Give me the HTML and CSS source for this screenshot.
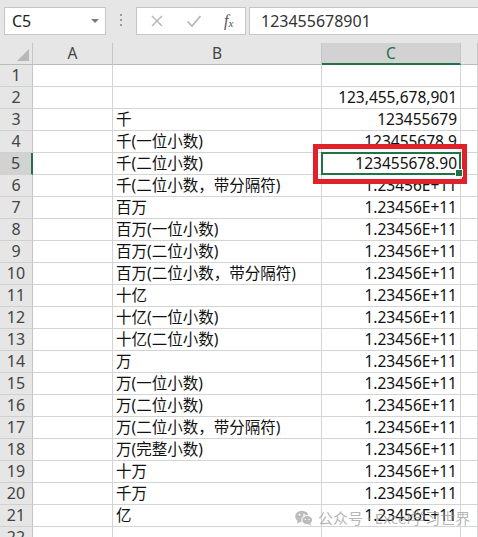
FILE: index.html
```html
<!DOCTYPE html>
<html lang="zh-CN">

<head>
    <meta charset="UTF-8">
    <meta name="viewport" content="width=device-width, initial-scale=1.0">
    <title>数字格式</title>
    <link rel="stylesheet" href="styles.css">
</head>

<body>
    <div class="libro">
        <!-- barra de fórmulas -->
        <div class="barra-formulas">
            <div class="cuadro-nombre">
                <span>C5</span>
                <span class="flecha"></span>
            </div>
            <div class="puntos"><i></i><i></i><i></i></div>
            <div class="botones-fx">
                <svg width="14" height="14" viewBox="0 0 14 14">
                    <path d="M2 2 L12 12 M12 2 L2 12" stroke="#b4b4b4" stroke-width="1.4" fill="none" />
                </svg>
                <svg width="16" height="14" viewBox="0 0 16 14">
                    <path d="M1.5 7.5 L6 12 L14.5 2" stroke="#b4b4b4" stroke-width="1.6" fill="none" />
                </svg>
                <span class="fx">f<sub>x</sub></span>
            </div>
            <div class="entrada">123455678901</div>
        </div>

        <!-- hoja -->
        <div class="hoja">
            <div class="esquina"><span class="triangulo"></span></div>
            <div class="cab-col">A</div>
            <div class="cab-col">B</div>
            <div class="cab-col activa">C</div>
            <div class="cab-col"></div>

            <div class="num">1</div><div class="celda"></div><div class="celda"></div><div class="celda"></div><div class="celda"></div>
            <div class="num">2</div><div class="celda"></div><div class="celda"></div><div class="celda dato">123,455,678,901</div><div class="celda"></div>
            <div class="num">3</div><div class="celda"></div><div class="celda texto">千</div><div class="celda dato">123455679</div><div class="celda"></div>
            <div class="num">4</div><div class="celda"></div><div class="celda texto">千(一位小数)</div><div class="celda dato">123455678.9</div><div class="celda"></div>
            <div class="num activa">5</div><div class="celda"></div><div class="celda texto">千(二位小数)</div><div class="celda dato seleccion">123455678.90<span class="asa"></span></div><div class="celda"></div>
            <div class="num">6</div><div class="celda"></div><div class="celda texto">千(二位小数，带分隔符)</div><div class="celda dato">1.23456E+11</div><div class="celda"></div>
            <div class="num">7</div><div class="celda"></div><div class="celda texto">百万</div><div class="celda dato">1.23456E+11</div><div class="celda"></div>
            <div class="num">8</div><div class="celda"></div><div class="celda texto">百万(一位小数)</div><div class="celda dato">1.23456E+11</div><div class="celda"></div>
            <div class="num">9</div><div class="celda"></div><div class="celda texto">百万(二位小数)</div><div class="celda dato">1.23456E+11</div><div class="celda"></div>
            <div class="num">10</div><div class="celda"></div><div class="celda texto">百万(二位小数，带分隔符)</div><div class="celda dato">1.23456E+11</div><div class="celda"></div>
            <div class="num">11</div><div class="celda"></div><div class="celda texto">十亿</div><div class="celda dato">1.23456E+11</div><div class="celda"></div>
            <div class="num">12</div><div class="celda"></div><div class="celda texto">十亿(一位小数)</div><div class="celda dato">1.23456E+11</div><div class="celda"></div>
            <div class="num">13</div><div class="celda"></div><div class="celda texto">十亿(二位小数)</div><div class="celda dato">1.23456E+11</div><div class="celda"></div>
            <div class="num">14</div><div class="celda"></div><div class="celda texto">万</div><div class="celda dato">1.23456E+11</div><div class="celda"></div>
            <div class="num">15</div><div class="celda"></div><div class="celda texto">万(一位小数)</div><div class="celda dato">1.23456E+11</div><div class="celda"></div>
            <div class="num">16</div><div class="celda"></div><div class="celda texto">万(二位小数)</div><div class="celda dato">1.23456E+11</div><div class="celda"></div>
            <div class="num">17</div><div class="celda"></div><div class="celda texto">万(二位小数，带分隔符)</div><div class="celda dato">1.23456E+11</div><div class="celda"></div>
            <div class="num">18</div><div class="celda"></div><div class="celda texto">万(完整小数)</div><div class="celda dato">1.23456E+11</div><div class="celda"></div>
            <div class="num">19</div><div class="celda"></div><div class="celda texto">十万</div><div class="celda dato">1.23456E+11</div><div class="celda"></div>
            <div class="num">20</div><div class="celda"></div><div class="celda texto">千万</div><div class="celda dato">1.23456E+11</div><div class="celda"></div>
            <div class="num">21</div><div class="celda"></div><div class="celda texto">亿</div><div class="celda dato">1.23456E+11</div><div class="celda"></div>
            <div class="num">22</div><div class="celda"></div><div class="celda"></div><div class="celda"></div><div class="celda"></div>
        </div>

        <!-- recuadro rojo sobre C5 -->
        <div class="marca-roja"></div>

        <!-- marca de agua -->
        <div class="marca-agua">
            <svg width="18" height="16" viewBox="0 0 17 15">
                <ellipse cx="6.5" cy="6" rx="6.3" ry="5.4" fill="#bcbcbc" />
                <path d="M2.5 9.5 L2 13 L5.5 11" fill="#bcbcbc" />
                <ellipse cx="11.5" cy="9.5" rx="5.2" ry="4.4" fill="#bcbcbc" stroke="#fff" stroke-width="1" />
                <path d="M14.5 12.5 L15.5 14.8 L12.5 13.5" fill="#bcbcbc" />
                <circle cx="4.3" cy="4.5" r="0.9" fill="#fff" />
                <circle cx="8.5" cy="4.5" r="0.9" fill="#fff" />
                <circle cx="9.8" cy="8.8" r="0.7" fill="#fff" />
                <circle cx="13.2" cy="8.8" r="0.7" fill="#fff" />
            </svg>
            <span>公众号 · Excel学习世界</span>
        </div>
    </div>
</body>

</html>
```

FILE: styles.css
```css
body {
    margin: 0;
    font-family: "Noto Sans", "Noto Sans CJK SC", sans-serif;
    background-color: #fff;
}

.libro {
    position: relative;
    width: 478px;
    height: 537px;
    overflow: hidden;
}

/* barra de fórmulas */
.barra-formulas {
    display: flex;
    align-items: flex-start;
    height: 43px;
    padding-top: 7px;
    padding-left: 4px;
    box-sizing: border-box;
    background-color: #e6e6e6;
}

.cuadro-nombre {
    display: flex;
    align-items: center;
    justify-content: space-between;
    width: 102px;
    height: 28px;
    box-sizing: border-box;
    padding: 0 6px 0 7px;
    background-color: #fff;
    border: 1px solid #c6c6c6;
    font-size: 16px;
    color: #222;
}

.flecha {
    width: 0;
    height: 0;
    border-left: 4px solid transparent;
    border-right: 4px solid transparent;
    border-top: 4px solid #7a7a7a;
}

.puntos {
    display: flex;
    flex-direction: column;
    gap: 3px;
    margin: 7px 14px 0 14px;
}

.puntos i {
    width: 2px;
    height: 2px;
    background-color: #9a9a9a;
}

.botones-fx {
    display: flex;
    align-items: center;
    gap: 22px;
    width: 110px;
    height: 28px;
    box-sizing: border-box;
    padding-left: 13px;
    background-color: #fff;
    border: 1px solid #c6c6c6;
}

.fx {
    font-family: "Liberation Serif", serif;
    font-style: italic;
    font-size: 16px;
    color: #555;
}

.fx sub {
    font-size: 11px;
    vertical-align: -1px;
}

.entrada {
    flex: 1;
    height: 28px;
    margin-left: 3px;
    box-sizing: border-box;
    padding-left: 11px;
    line-height: 26px;
    background-color: #fff;
    border: 1px solid #c6c6c6;
    border-right: none;
    font-size: 16px;
    color: #333;
}

/* hoja */
.hoja {
    display: grid;
    grid-template-columns: 33px 80px 209px 139px 1fr;
    grid-template-rows: 22px;
    grid-auto-rows: 22px;
}

.hoja > div {
    box-sizing: border-box;
    border-right: 1px solid #d4d4d4;
    border-bottom: 1px solid #d4d4d4;
    font-size: 15.5px;
    line-height: 21px;
    white-space: nowrap;
}

.esquina {
    position: relative;
    background-color: #e6e6e6;
}

.hoja > .esquina,
.hoja > .cab-col {
    border-right-color: #c6c6c6;
    border-bottom-color: #bcbcbc;
}

.triangulo {
    position: absolute;
    right: 3px;
    bottom: 3px;
    width: 0;
    height: 0;
    border-left: 12px solid transparent;
    border-bottom: 12px solid #b8b8b8;
}

.cab-col {
    background-color: #e6e6e6;
    text-align: center;
    color: #444;
}

.cab-col.activa {
    background-color: #d2d2d2;
    color: #217346;
}

.hoja > .cab-col.activa {
    border-bottom: 2px solid #217346;
}

.num {
    background-color: #e6e6e6;
    text-align: center;
    color: #444;
}

.hoja > .num {
    border-right-color: #c6c6c6;
    border-bottom-color: #d0d0d0;
    font-size: 16px;
}

.hoja > .num.activa {
    background-color: #d2d2d2;
    border-right: 2px solid #217346;
}

.celda {
    color: #111;
    overflow: hidden;
}

.texto {
    padding-left: 3px;
    overflow: visible;
}

.dato {
    text-align: right;
    padding-right: 3px;
}

.seleccion {
    position: relative;
    overflow: visible;
}

.seleccion::after {
    content: "";
    position: absolute;
    left: -1px;
    top: -1px;
    right: -1px;
    bottom: -1px;
    border: 2px solid #217346;
}

.asa {
    position: absolute;
    right: -3px;
    bottom: -3px;
    width: 6px;
    height: 6px;
    background-color: #217346;
    border: 1px solid #fff;
    z-index: 1;
}

/* recuadro rojo de anotación */
.marca-roja {
    position: absolute;
    left: 313px;
    top: 144px;
    width: 154px;
    height: 40px;
    box-sizing: border-box;
    border: 5px solid #e0202a;
}

/* marca de agua */
.marca-agua {
    position: absolute;
    left: 295px;
    top: 507px;
    display: flex;
    align-items: center;
    gap: 5px;
    font-size: 15px;
    color: rgba(150, 150, 150, 0.7);
}
```
